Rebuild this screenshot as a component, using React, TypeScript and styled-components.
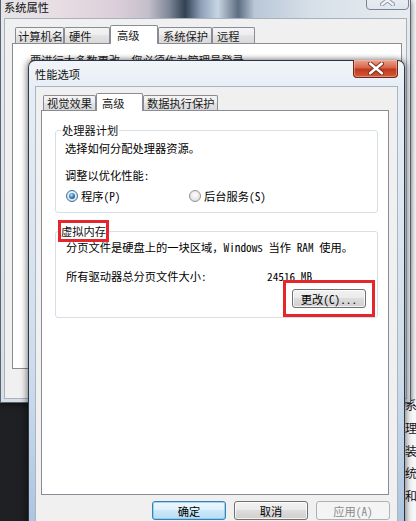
import React from "react";
import styled, { createGlobalStyle, css } from "styled-components";

const FONT = `"Noto Sans Mono CJK SC", "Noto Sans CJK SC", "Noto Sans", sans-serif`;

const GlobalStyle = createGlobalStyle`
  html, body { margin: 0; padding: 0; }
  body {
    background: #1f2023;
    font-family: ${FONT};
    font-size: 11.25px;
    color: #000;
    overflow: hidden;
  }
  * { box-sizing: border-box; }
`;

const Desktop = styled.div`
  position: relative;
  width: 416px;
  height: 521px;
  overflow: hidden;
  background: #1f2023;
`;

const BackWindow = styled.div`
  position: absolute;
  left: 401px;
  top: 0;
  width: 120px;
  height: 521px;
  background: #f6f7f8;
  border-left: 1px solid #8d98a4;
  padding: 394px 0 0 3px;
  display: flex;
  flex-direction: column;
`;

const BackLine = styled.div`
  line-height: 22.75px;
  font-size: 12px;
  white-space: nowrap;
  color: #111;
`;

const OuterWindow = styled.div`
  position: absolute;
  left: 0;
  top: 0;
  width: 411px;
  height: 403px;
  display: flex;
  flex-direction: column;
  padding: 0 3px 3px 3px;
  border: 1px solid #59636e;
  border-top: none;
  background-color: #dfe3e8;
  background-image: linear-gradient(180deg, #e6e9ed, #d9dfe6);
  box-shadow: 0 1px 6px rgba(0, 0, 0, 0.6);
`;

const OuterTitleBar = styled.div`
  position: relative;
  flex: none;
  height: 18px;
  margin: 0 -3px;
  padding: 1px 0 0 3px;
  display: flex;
  align-items: flex-start;
  line-height: 13px;
  color: #111;
  background-image: linear-gradient(90deg, #e4e5e8 0%, #e8dde3 14%, #dccfd9 28%, #c4bfcc 36%, #7f8999 41%, #334153 45%, #8ea2b9 49%, #c8d5e2 53%, #5d6d81 58%, #b9c7d6 62%, #d7e0e9 76%, #e8ecf0 100%);
`;

const OuterClose = styled.div`
  position: absolute;
  right: 1px;
  top: -10px;
  width: 43px;
  height: 20px;
  border: 1px solid #7a8594;
  border-radius: 0 0 4px 4px;
  background: linear-gradient(#eef2f6, #dfe6ee);
  display: flex;
  align-items: flex-end;
  justify-content: center;
  padding-bottom: 3px;
`;

const OuterClient = styled.div`
  flex: 1;
  background: #f0f0f0;
  border: 1px solid #a7b2be;
  padding: 6px 4px 0 7px;
  display: flex;
  flex-direction: column;
`;

const TabRow = styled.div<{ $indent: number }>`
  display: flex;
  align-items: flex-start;
  padding-left: ${(p) => p.$indent}px;
  flex: none;
`;

const Tab = styled.div<{ $selected?: boolean; $w: number; $pl: number; $h: number }>`
  position: relative;
  z-index: ${(p) => (p.$selected ? 1 : 0)};
  flex: none;
  width: ${(p) => p.$w}px;
  height: ${(p) => (p.$selected ? p.$h + 3 : p.$h)}px;
  margin-top: ${(p) => (p.$selected ? 0 : 2)}px;
  margin-bottom: ${(p) => (p.$selected ? -1 : 0)}px;
  padding-left: ${(p) => p.$pl}px;
  border: 1px solid #898c95;
  border-bottom: none;
  border-radius: 2px 2px 0 0;
  background: ${(p) =>
    p.$selected
      ? "#ffffff"
      : "linear-gradient(#f4f4f4, #ededed 50%, #e3e3e3 50%, #d9d9d9)"};
  display: flex;
  align-items: center;
  white-space: nowrap;
  line-height: 14px;
  color: #1a1a1a;
`;

const OuterPanel = styled.div`
  flex: none;
  height: 326px;
  background: #fff;
  border: 1px solid #898c95;
  padding: 9px 0 0 17px;
`;

const OuterText = styled.div`
  line-height: 14px;
  white-space: nowrap;
  color: #222;
`;

const InnerWindow = styled.div`
  position: absolute;
  left: 28px;
  top: 60px;
  width: 377px;
  height: 475px;
  display: flex;
  flex-direction: column;
  padding: 0 6px;
  border: 1px solid rgba(28, 38, 52, 0.9);
  border-radius: 7px 7px 0 0;
  background: linear-gradient(180deg, #f1f5f9 0%, #e6edf5 6%, #dde7f1 30%, #cbdaea 70%, #aac3df 100%);
  box-shadow: -2px 0 6px rgba(0, 0, 0, 0.35), 2px 0 6px rgba(0, 0, 0, 0.35);
`;

const InnerTitleBar = styled.div`
  flex: none;
  height: 25px;
  display: flex;
  align-items: center;
  line-height: 14px;
  color: #111;
`;

const InnerClose = styled.div`
  position: absolute;
  right: 6px;
  top: -1px;
  width: 45px;
  height: 18px;
  border: 1px solid #6b2a1e;
  border-top: none;
  border-radius: 0 0 4px 4px;
  background: linear-gradient(#eaa48f 0%, #d7664b 45%, #c3381c 55%, #d35a3c 100%);
  box-shadow: inset 0 0 0 1px rgba(255, 200, 180, 0.45);
  display: flex;
  align-items: center;
  justify-content: center;
`;

const InnerClient = styled.div`
  flex: 1;
  background: #f0f0f0;
  border: 1px solid #a9b5c2;
  padding: 6px 8px 0 5px;
  display: flex;
  flex-direction: column;
`;

const TabPanel = styled.div`
  flex: none;
  height: 385px;
  background: #fff;
  border: 1px solid #898c95;
  padding: 12px 10px 0 13px;
  display: flex;
  flex-direction: column;
  gap: 10px;
`;

const Group = styled.fieldset<{ $pt: number }>`
  margin: 0;
  min-width: 0;
  border: 1px solid #d5dfe5;
  border-radius: 3px;
  padding: ${(p) => p.$pt}px 9px 9px 9px;
  display: flex;
  flex-direction: column;
`;

const Legend = styled.legend<{ $marked?: boolean }>`
  margin-left: -4px;
  padding: ${(p) => (p.$marked ? "0" : "0 1px")};
  line-height: ${(p) => (p.$marked ? 16 : 14)}px;
  color: #111;
  ${(p) =>
    p.$marked &&
    css`
      outline: 3px solid #e5262b;
      outline-offset: 0;
    `}
`;

const Line = styled.div<{ $mt?: number; $ml?: number }>`
  line-height: 14px;
  white-space: nowrap;
  margin-top: ${(p) => p.$mt ?? 0}px;
  margin-left: ${(p) => p.$ml ?? 0}px;
`;

const RadioRow = styled.div`
  display: flex;
  align-items: center;
  margin-top: 7px;
  margin-left: 1px;
  height: 14px;
`;

const RadioOption = styled.label<{ $w?: number }>`
  display: flex;
  align-items: center;
  gap: 3px;
  width: ${(p) => (p.$w ? `${p.$w}px` : "auto")};
  line-height: 14px;
  white-space: nowrap;
`;

const RadioCircle = styled.span<{ $checked?: boolean }>`
  flex: none;
  width: 12px;
  height: 12px;
  border-radius: 50%;
  border: 1px solid ${(p) => (p.$checked ? "#3a6f98" : "#8f9396")};
  background: radial-gradient(circle at 50% 40%, #ffffff 0%, #e3e3e3 65%, #cfcfcf 100%);
  display: flex;
  align-items: center;
  justify-content: center;

  &::after {
    content: "";
    display: ${(p) => (p.$checked ? "block" : "none")};
    width: 6px;
    height: 6px;
    border-radius: 50%;
    background: radial-gradient(circle at 40% 35%, #bfe8ff 0%, #2a86d0 45%, #0c3f78 100%);
  }
`;

const SizeRow = styled.div`
  display: flex;
  margin-top: 15px;
  line-height: 14px;
  white-space: nowrap;
  margin-left: 1px;
`;

const SizeLabel = styled.span`
  width: 201px;
  flex: none;
`;

const ButtonRow = styled.div<{ $mt: number; $mr?: number }>`
  display: flex;
  justify-content: flex-end;
  gap: 8px;
  margin-top: ${(p) => p.$mt}px;
  margin-right: ${(p) => p.$mr ?? 0}px;
`;

const ButtonWrap = styled.span<{ $marked?: boolean }>`
  display: inline-flex;
  ${(p) =>
    p.$marked &&
    css`
      outline: 3px solid #e5262b;
      outline-offset: 6px;
    `}
`;

const Button = styled.button<{ $variant?: "default" | "normal" | "disabled"; $w: number }>`
  width: ${(p) => p.$w}px;
  height: 19px;
  padding: 0;
  font-family: ${FONT};
  font-size: 11.25px;
  line-height: 14px;
  border-radius: 3px;
  color: #000;
  border: 1px solid #707070;
  background: linear-gradient(#f2f2f2, #ebebeb 45%, #dddddd 50%, #cfcfcf);
  box-shadow: inset 0 0 0 1px rgba(255, 255, 255, 0.75);
  ${(p) =>
    p.$variant === "default" &&
    css`
      border-color: #3c7fb1;
      background: linear-gradient(#eef7fd, #dff1fb 45%, #cbe8f9 50%, #b8def5);
      box-shadow: inset 0 0 0 1px rgba(120, 200, 240, 0.7);
    `}
  ${(p) =>
    p.$variant === "disabled" &&
    css`
      border-color: #adb2b5;
      background: #f4f4f4;
      color: #8a8a8a;
      box-shadow: none;
    `}
`;

const XIcon = ({ color, outline, size }: { color: string; outline: string; size: number }) => (
  <svg width={size} height={size * 0.8} viewBox="0 0 15 12">
    <path d="M2 1.5 L13 10.5 M13 1.5 L2 10.5" stroke={outline} strokeWidth={4.2} strokeLinecap="round" />
    <path d="M2 1.5 L13 10.5 M13 1.5 L2 10.5" stroke={color} strokeWidth={2.4} strokeLinecap="round" />
  </svg>
);

export default function App() {
  return (
    <>
      <GlobalStyle />
      <Desktop>
        <BackWindow>
          <BackLine>系统</BackLine>
          <BackLine>理器</BackLine>
          <BackLine>装置</BackLine>
          <BackLine>统计</BackLine>
          <BackLine>和</BackLine>
        </BackWindow>

        <OuterWindow>
          <OuterTitleBar>
            系统属性
            <OuterClose>
              <XIcon color="#eef2f6" outline="#8994a2" size={15} />
            </OuterClose>
          </OuterTitleBar>
          <OuterClient>
            <TabRow $indent={3}>
              <Tab $w={49} $pl={2} $h={16}>计算机名</Tab>
              <Tab $w={46} $pl={4} $h={16}>硬件</Tab>
              <Tab $selected $w={48} $pl={6} $h={16}>高级</Tab>
              <Tab $w={54} $pl={4} $h={16}>系统保护</Tab>
              <Tab $w={43} $pl={4} $h={16}>远程</Tab>
            </TabRow>
            <OuterPanel>
              <OuterText>要进行大多数更改，您必须作为管理员登录。</OuterText>
            </OuterPanel>
          </OuterClient>
        </OuterWindow>

        <InnerWindow>
          <InnerTitleBar>性能选项</InnerTitleBar>
          <InnerClose>
            <XIcon color="#ffffff" outline="#7a2a1a" size={16} />
          </InnerClose>
          <InnerClient>
            <TabRow $indent={2}>
              <Tab $w={53} $pl={3} $h={15}>视觉效果</Tab>
              <Tab $selected $w={47} $pl={5} $h={15}>高级</Tab>
              <Tab $w={75} $pl={3} $h={15}>数据执行保护</Tab>
            </TabRow>
            <TabPanel>
              <Group $pt={4}>
                <Legend>处理器计划</Legend>
                <Line>选择如何分配处理器资源。</Line>
                <Line $mt={13}>调整以优化性能:</Line>
                <RadioRow>
                  <RadioOption $w={123}>
                    <RadioCircle $checked />
                    程序(P)
                  </RadioOption>
                  <RadioOption>
                    <RadioCircle />
                    后台服务(S)
                  </RadioOption>
                </RadioRow>
              </Group>

              <Group $pt={1}>
                <Legend $marked>虚拟内存</Legend>
                <Line $ml={1}>分页文件是硬盘上的一块区域，Windows 当作 RAM 使用。</Line>
                <SizeRow>
                  <SizeLabel>所有驱动器总分页文件大小:</SizeLabel>
                  <span>24516 MB</span>
                </SizeRow>
                <ButtonRow $mt={6} $mr={2}>
                  <ButtonWrap $marked>
                    <Button $w={74}>更改(C)...</Button>
                  </ButtonWrap>
                </ButtonRow>
              </Group>
            </TabPanel>
            <ButtonRow $mt={6} $mr={-1}>
              <Button $variant="default" $w={74}>确定</Button>
              <Button $w={74}>取消</Button>
              <Button $variant="disabled" $w={74}>应用(A)</Button>
            </ButtonRow>
          </InnerClient>
        </InnerWindow>
      </Desktop>
    </>
  );
}
